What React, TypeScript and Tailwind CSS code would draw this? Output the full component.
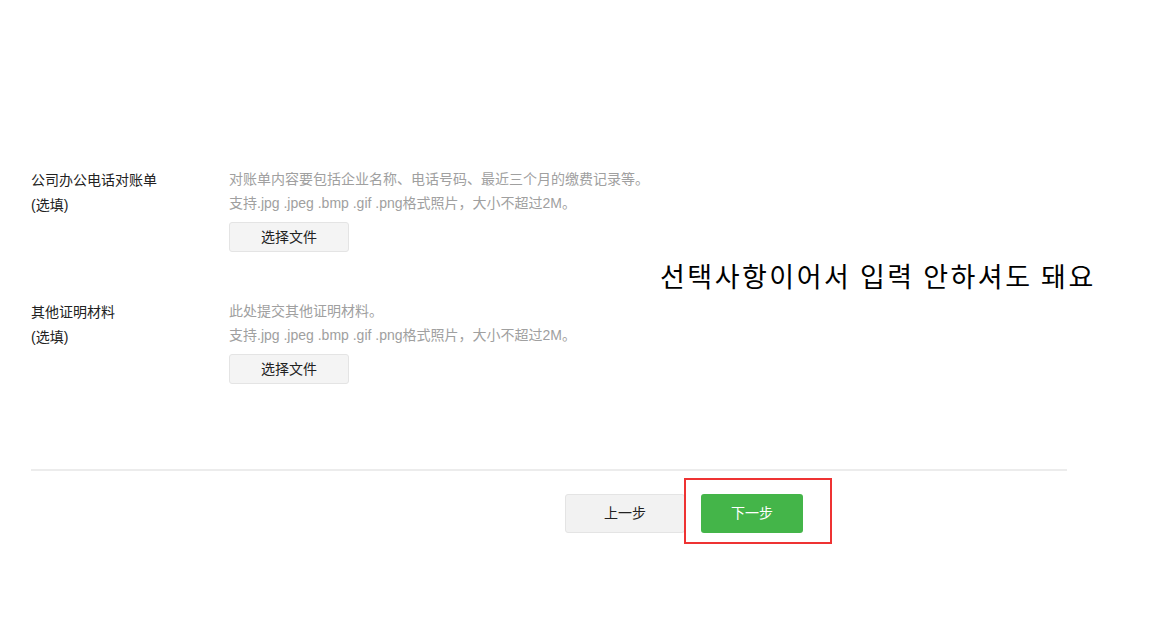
const cjk = { fontFamily: '"Liberation Sans", "Noto Sans CJK SC", sans-serif' };

const items = [
  {
    id: 1,
    label: "公司办公电话对账单",
    hint: "对账单内容要包括企业名称、电话号码、最近三个月的缴费记录等。",
  },
  {
    id: 2,
    label: "其他证明材料",
    hint: "此处提交其他证明材料。",
  },
];

export default function App() {
  return (
    <div className="relative w-[1175px] h-[630px] bg-white overflow-hidden" style={cjk}>
      <div className="pt-[167px] pl-[31px] w-[1067px]">
        {/* upload rows */}
        <div className="flex flex-col gap-[47px]">
          {items.map((item) => (
            <div key={item.id} className="flex">
              <div className="w-[198px] pt-[1px] text-[14px] leading-[25px] text-[#222]">
                <div>{item.label}</div>
                <div>(选填)</div>
              </div>
              <div className="flex flex-col">
                <p className="text-[14px] leading-[24px] text-[#a0a0a0]">{item.hint}</p>
                <p className="text-[14px] leading-[24px] text-[#a0a0a0]">
                  支持.jpg .jpeg .bmp .gif .png格式照片，大小不超过2M。
                </p>
                <button className="mt-[7px] w-[120px] h-[30px] rounded-[3px] border border-[#e4e4e4] bg-[#f4f4f4] text-[14px] text-[#222]">
                  选择文件
                </button>
              </div>
            </div>
          ))}
        </div>

        {/* divider */}
        <div className="mt-[85px] h-[2px] bg-[#ececec]" />

        {/* step buttons */}
        <div className="mt-[23px] pl-[534px] flex gap-[16px]">
          <button className="w-[120px] h-[39px] rounded-[3px] border border-[#e4e4e4] bg-[#f2f2f2] text-[14px] text-[#222]">
            上一步
          </button>
          <button className="w-[102px] h-[39px] rounded-[3px] bg-[#44b549] text-[14px] text-white">
            下一步
          </button>
        </div>
      </div>

      {/* annotation overlay */}
      <div
        className="absolute left-[660px] top-[257px] text-[27px] leading-[38px] tracking-[2.5px] text-black"
        style={{ fontFamily: '"Noto Sans CJK KR", sans-serif' }}
      >
        선택사항이어서 입력 안하셔도 돼요
      </div>
      <div className="absolute left-[684px] top-[478px] w-[148px] h-[66px] border-2 border-[#ee3333]" />
    </div>
  );
}
